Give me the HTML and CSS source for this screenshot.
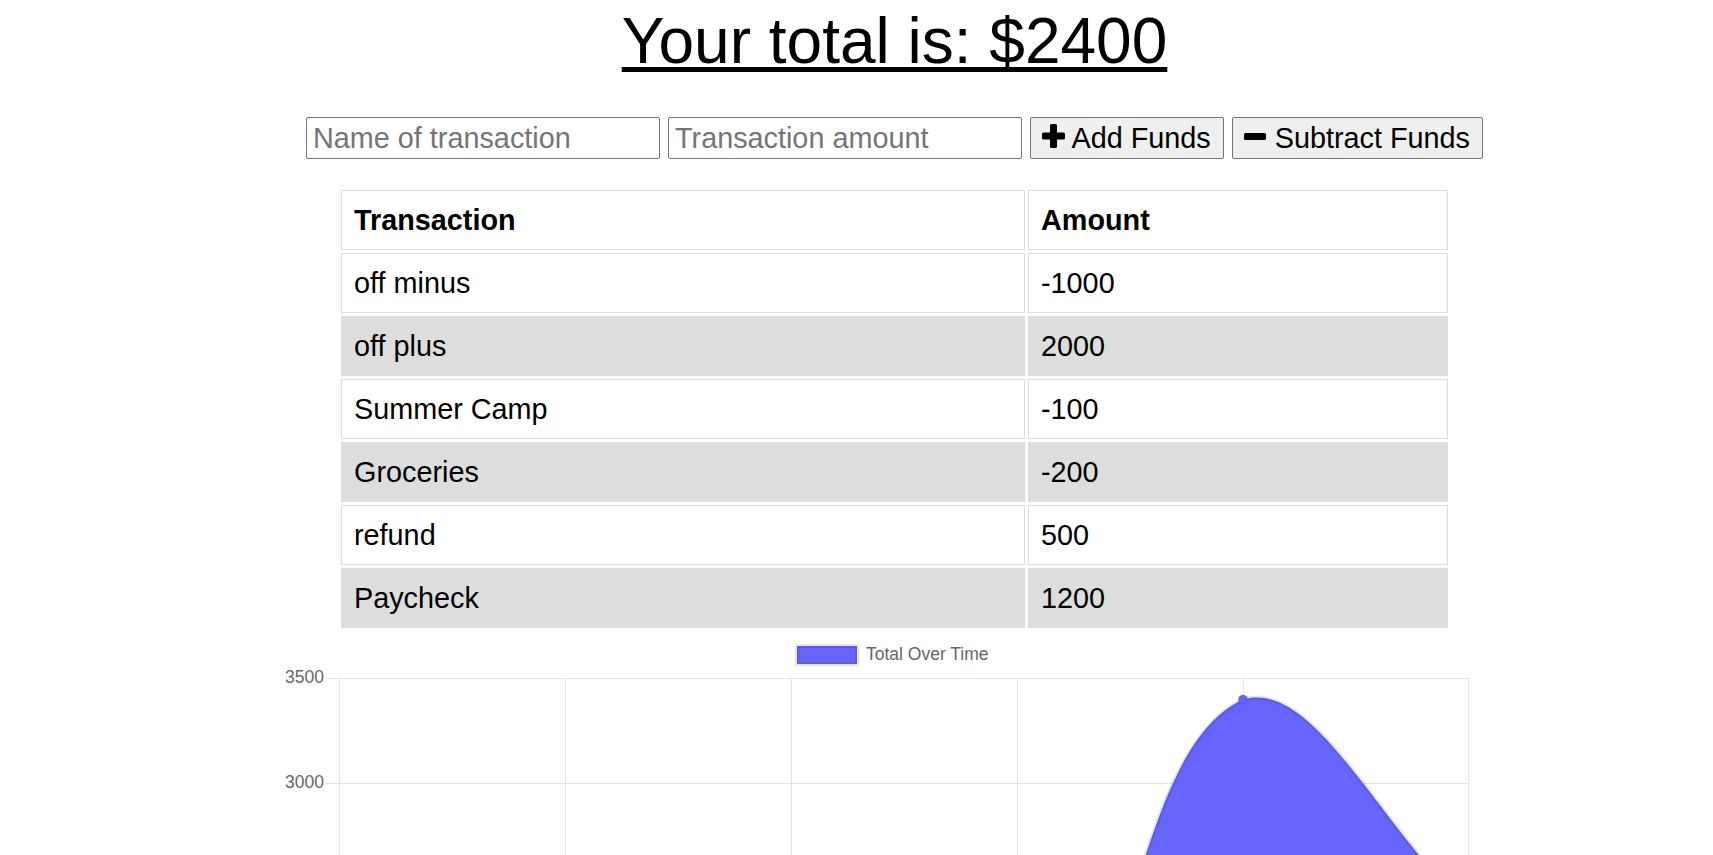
FILE: index.html
```html
<!DOCTYPE html>
<html lang="en">
<head>
<meta charset="utf-8">
<title>Budget Tracker</title>
<link rel="stylesheet" href="styles.css">
</head>
<body>
<main class="page">
  <h1 class="total"><span class="total-text">Your total is: $2400</span></h1>

  <form class="entry">
    <input class="field" type="text" placeholder="Name of transaction">
    <input class="field" type="text" placeholder="Transaction amount">
    <button type="button" class="btn"><svg class="btn-icon" width="23" height="24" viewBox="0 0 23 24"><rect x="8" y="0" width="7" height="24" rx="1.5"/><rect x="0" y="8.5" width="23" height="7" rx="1.5"/></svg> Add Funds</button>
    <button type="button" class="btn"><svg class="btn-icon" width="23" height="24" viewBox="0 0 23 24"><rect x="0" y="9" width="22" height="7" rx="1.5"/></svg> Subtract Funds</button>
  </form>

  <table class="ledger">
    <colgroup><col class="col-name"><col class="col-amount"></colgroup>
    <thead>
      <tr><th>Transaction</th><th>Amount</th></tr>
    </thead>
    <tbody>
      <tr><td>off minus</td><td>-1000</td></tr>
      <tr><td>off plus</td><td>2000</td></tr>
      <tr><td>Summer Camp</td><td>-100</td></tr>
      <tr><td>Groceries</td><td>-200</td></tr>
      <tr><td>refund</td><td>500</td></tr>
      <tr><td>Paycheck</td><td>1200</td></tr>
    </tbody>
  </table>

  <svg class="chart" width="1239" height="224" viewBox="0 0 1239 224">
    <g class="legend">
      <rect x="522" y="15" width="60" height="18" fill="#6666ff" stroke="rgba(0,0,0,0.1)" stroke-width="4"/>
      <text x="591" y="29" class="legend-text">Total Over Time</text>
    </g>
    <g class="grid" stroke="rgba(0,0,0,0.1)" stroke-width="1" fill="none">
      <line x1="50" y1="47.5" x2="1193.5" y2="47.5"/>
      <line x1="50" y1="152.5" x2="1193.5" y2="152.5"/>
      <line x1="64.5" y1="47.5" x2="64.5" y2="224"/>
      <line x1="290.5" y1="47.5" x2="290.5" y2="224"/>
      <line x1="516.5" y1="47.5" x2="516.5" y2="224"/>
      <line x1="742.5" y1="47.5" x2="742.5" y2="224"/>
      <line x1="968.5" y1="47.5" x2="968.5" y2="224"/>
      <line x1="1193.5" y1="47.5" x2="1193.5" y2="224"/>
    </g>
    <g class="ticks">
      <text x="49" y="47.5" class="tick">3500</text>
      <text x="49" y="152.5" class="tick">3000</text>
    </g>
    <path d="M742.25 488.5 C864.65 380.3 858.3 119.5 968 68.5 C1038.9 47.5 1103.5 194.5 1193.75 278.5 L1193.75 600 L742.25 600 Z" fill="#6666ff"/>
    <path d="M742.25 488.5 C864.65 380.3 858.3 119.5 968 68.5 C1038.9 47.5 1103.5 194.5 1193.75 278.5" fill="none" stroke="rgba(0,0,0,0.1)" stroke-width="4"/>
    <circle cx="968" cy="68.5" r="4.5" fill="#6666ff" stroke="rgba(0,0,0,0.1)" stroke-width="1.5"/>
  </svg>
</main>
</body>
</html>
```

FILE: styles.css
```css
html,
body {
  margin: 0;
  padding: 0;
}

body {
  font-family: "Liberation Sans", Arial, sans-serif;
  color: #000;
  background: #fff;
  overflow: hidden;
}

.page {
  padding-left: 76px;
  display: flex;
  flex-direction: column;
  align-items: center;
}

.total {
  margin: 5px 0 0;
  font-size: 64px;
  font-weight: 400;
  line-height: 72px;
}

.total-text {
  text-decoration: underline;
  text-decoration-thickness: 5px;
  text-underline-offset: 4px;
  text-decoration-skip-ink: auto;
}

.entry {
  display: flex;
  gap: 8px;
  margin: 40px 0 0;
}

.field {
  box-sizing: border-box;
  width: 354px;
  height: 42px;
  margin: 0;
  border: 1px solid #767676;
  border-radius: 2px;
  padding: 0 6px;
  font: 28.8px "Liberation Sans", Arial, sans-serif;
  color: #000;
  background: #fff;
}

.field::placeholder {
  color: #757575;
}

.btn {
  box-sizing: border-box;
  height: 42px;
  margin: 0;
  border: 1px solid #767676;
  border-radius: 2px;
  background: #efefef;
  padding: 0 12px 0 11px;
  font: 28.8px "Liberation Sans", Arial, sans-serif;
  line-height: 32px;
  color: #000;
  white-space: nowrap;
}

.btn-icon {
  vertical-align: baseline;
  fill: #000;
}

.ledger {
  width: 1113px;
  margin-top: 28px;
  border-spacing: 3px;
  table-layout: fixed;
  font-size: 28.8px;
  line-height: 32px;
}

.col-name {
  width: 684px;
}

.ledger th,
.ledger td {
  border: 1px solid #ddd;
  padding: 13px 12px;
  text-align: left;
}

.ledger th {
  font-weight: 700;
}

.ledger tbody tr:nth-child(even) td {
  background: #ddd;
}

.chart {
  display: block;
  font-family: "Liberation Sans", Arial, sans-serif;
}

.legend-text {
  font-size: 17.5px;
  fill: #666;
}

.tick {
  font-size: 17.5px;
  fill: #666;
  text-anchor: end;
  dominant-baseline: middle;
}
```
